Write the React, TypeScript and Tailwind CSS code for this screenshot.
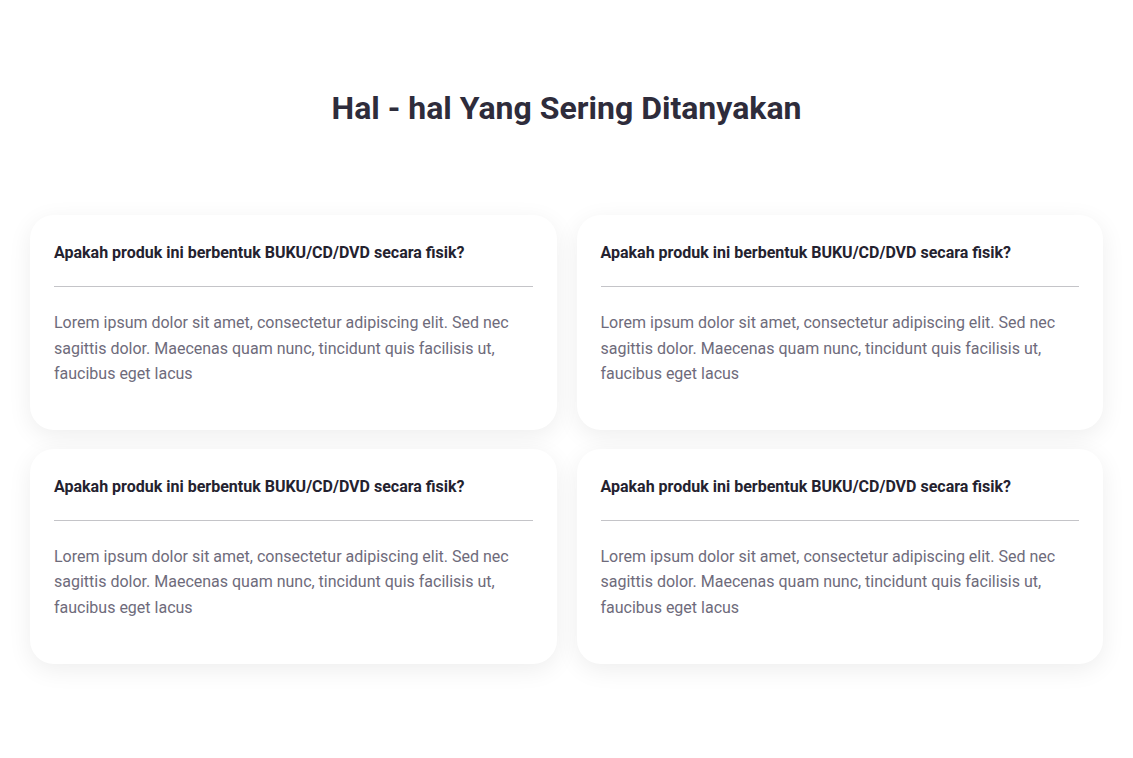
const faqs = Array.from({ length: 4 }, () => ({
  question: "Apakah produk ini berbentuk BUKU/CD/DVD secara fisik?",
  answer:
    "Lorem ipsum dolor sit amet, consectetur adipiscing elit. Sed nec sagittis dolor. Maecenas quam nunc, tincidunt quis facilisis ut, faucibus eget lacus",
}));

function FaqCard({ question, answer }: { question: string; answer: string }) {
  return (
    <div className="bg-white rounded-[24px] shadow-[0_6px_24px_rgba(0,0,0,0.07)] px-6 pt-[25px] pb-[43px]">
      <h3 className="text-base leading-[26px] font-bold text-[#24222f]">
        {question}
      </h3>
      <hr className="mt-[20px] mb-[23px] border-0 border-t border-[#c4c4c8]" />
      <p className="text-base leading-[25.6px] text-[#6e6b7b]">{answer}</p>
    </div>
  );
}

export default function App() {
  return (
    <div
      className="min-h-[758px] bg-white px-[30px] pt-[88px]"
      style={{ fontFamily: "Roboto, 'Noto Sans', sans-serif" }}
    >
      <h2 className="text-center text-[32px] leading-[40px] font-bold text-[#2e2c3b]">
        Hal - hal Yang Sering Ditanyakan
      </h2>
      <div className="mt-[87px] grid grid-cols-2 gap-x-5 gap-y-[19px]">
        {faqs.map((f, i) => (
          <FaqCard key={i} question={f.question} answer={f.answer} />
        ))}
      </div>
    </div>
  );
}
